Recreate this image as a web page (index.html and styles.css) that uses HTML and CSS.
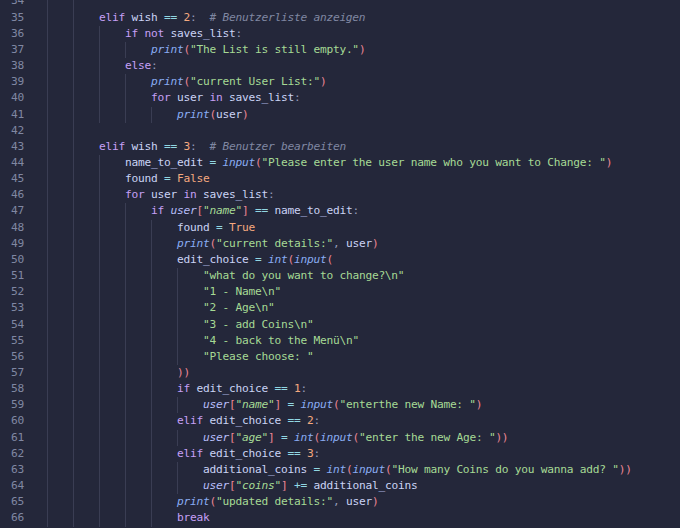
FILE: index.html
```html
<!DOCTYPE html>
<html>
<head>
<meta charset="utf-8">
<link rel="stylesheet" href="styles.css">
</head>
<body>
<div class="editor">
<div class="ln"><span class="no">34</span><span class="g"></span><span class="g"></span><span class="t"></span></div>
<div class="ln"><span class="no">35</span><span class="g"></span><span class="g"></span><span class="t"><span class="k">elif</span> wish <span class="o">==</span> <span class="n">2</span><span class="u">:</span>  <span class="c"># Benutzerliste anzeigen</span></span></div>
<div class="ln"><span class="no">36</span><span class="g"></span><span class="g"></span><span class="g"></span><span class="t"><span class="k">if</span> <span class="k">not</span> saves_list<span class="u">:</span></span></div>
<div class="ln"><span class="no">37</span><span class="g"></span><span class="g"></span><span class="g"></span><span class="g"></span><span class="t"><span class="f">print</span><span class="p">(</span><span class="s">"The List is still empty."</span><span class="p">)</span></span></div>
<div class="ln"><span class="no">38</span><span class="g"></span><span class="g"></span><span class="g"></span><span class="t"><span class="k">else</span><span class="u">:</span></span></div>
<div class="ln"><span class="no">39</span><span class="g"></span><span class="g"></span><span class="g"></span><span class="g"></span><span class="t"><span class="f">print</span><span class="p">(</span><span class="s">"current User List:"</span><span class="p">)</span></span></div>
<div class="ln"><span class="no">40</span><span class="g"></span><span class="g"></span><span class="g"></span><span class="g"></span><span class="t"><span class="k">for</span> user <span class="k">in</span> saves_list<span class="u">:</span></span></div>
<div class="ln"><span class="no">41</span><span class="g"></span><span class="g"></span><span class="g"></span><span class="g"></span><span class="g"></span><span class="t"><span class="f">print</span><span class="p">(</span>user<span class="p">)</span></span></div>
<div class="ln"><span class="no">42</span><span class="g"></span><span class="g"></span><span class="t"></span></div>
<div class="ln"><span class="no">43</span><span class="g"></span><span class="g"></span><span class="t"><span class="k">elif</span> wish <span class="o">==</span> <span class="n">3</span><span class="u">:</span>  <span class="c"># Benutzer bearbeiten</span></span></div>
<div class="ln"><span class="no">44</span><span class="g"></span><span class="g"></span><span class="g"></span><span class="t">name_to_edit <span class="o">=</span> <span class="f">input</span><span class="p">(</span><span class="s">"Please enter the user name who you want to Change: "</span><span class="p">)</span></span></div>
<div class="ln"><span class="no">45</span><span class="g"></span><span class="g"></span><span class="g"></span><span class="t">found <span class="o">=</span> <span class="n">False</span></span></div>
<div class="ln"><span class="no">46</span><span class="g"></span><span class="g"></span><span class="g"></span><span class="t"><span class="k">for</span> user <span class="k">in</span> saves_list<span class="u">:</span></span></div>
<div class="ln"><span class="no">47</span><span class="g"></span><span class="g"></span><span class="g"></span><span class="g"></span><span class="t"><span class="k">if</span> <span class="v">user</span><span class="p">[</span><span class="s">"<i>name</i>"</span><span class="p">]</span> <span class="o">==</span> name_to_edit<span class="u">:</span></span></div>
<div class="ln"><span class="no">48</span><span class="g"></span><span class="g"></span><span class="g"></span><span class="g"></span><span class="g"></span><span class="t">found <span class="o">=</span> <span class="n">True</span></span></div>
<div class="ln"><span class="no">49</span><span class="g"></span><span class="g"></span><span class="g"></span><span class="g"></span><span class="g"></span><span class="t"><span class="f">print</span><span class="p">(</span><span class="s">"current details:"</span><span class="u">,</span> user<span class="p">)</span></span></div>
<div class="ln"><span class="no">50</span><span class="g"></span><span class="g"></span><span class="g"></span><span class="g"></span><span class="g"></span><span class="t">edit_choice <span class="o">=</span> <span class="f">int</span><span class="p">(</span><span class="f">input</span><span class="p">(</span></span></div>
<div class="ln"><span class="no">51</span><span class="g"></span><span class="g"></span><span class="g"></span><span class="g"></span><span class="g"></span><span class="g"></span><span class="t"><span class="s">"what do you want to change?\n"</span></span></div>
<div class="ln"><span class="no">52</span><span class="g"></span><span class="g"></span><span class="g"></span><span class="g"></span><span class="g"></span><span class="g"></span><span class="t"><span class="s">"1 - Name\n"</span></span></div>
<div class="ln"><span class="no">53</span><span class="g"></span><span class="g"></span><span class="g"></span><span class="g"></span><span class="g"></span><span class="g"></span><span class="t"><span class="s">"2 - Age\n"</span></span></div>
<div class="ln"><span class="no">54</span><span class="g"></span><span class="g"></span><span class="g"></span><span class="g"></span><span class="g"></span><span class="g"></span><span class="t"><span class="s">"3 - add Coins\n"</span></span></div>
<div class="ln"><span class="no">55</span><span class="g"></span><span class="g"></span><span class="g"></span><span class="g"></span><span class="g"></span><span class="g"></span><span class="t"><span class="s">"4 - back to the Menü\n"</span></span></div>
<div class="ln"><span class="no">56</span><span class="g"></span><span class="g"></span><span class="g"></span><span class="g"></span><span class="g"></span><span class="g"></span><span class="t"><span class="s">"Please choose: "</span></span></div>
<div class="ln"><span class="no">57</span><span class="g"></span><span class="g"></span><span class="g"></span><span class="g"></span><span class="g"></span><span class="t"><span class="p">))</span></span></div>
<div class="ln"><span class="no">58</span><span class="g"></span><span class="g"></span><span class="g"></span><span class="g"></span><span class="g"></span><span class="t"><span class="k">if</span> edit_choice <span class="o">==</span> <span class="n">1</span><span class="u">:</span></span></div>
<div class="ln"><span class="no">59</span><span class="g"></span><span class="g"></span><span class="g"></span><span class="g"></span><span class="g"></span><span class="g"></span><span class="t"><span class="v">user</span><span class="p">[</span><span class="s">"<i>name</i>"</span><span class="p">]</span> <span class="o">=</span> <span class="f">input</span><span class="p">(</span><span class="s">"enterthe new Name: "</span><span class="p">)</span></span></div>
<div class="ln"><span class="no">60</span><span class="g"></span><span class="g"></span><span class="g"></span><span class="g"></span><span class="g"></span><span class="t"><span class="k">elif</span> edit_choice <span class="o">==</span> <span class="n">2</span><span class="u">:</span></span></div>
<div class="ln"><span class="no">61</span><span class="g"></span><span class="g"></span><span class="g"></span><span class="g"></span><span class="g"></span><span class="g"></span><span class="t"><span class="v">user</span><span class="p">[</span><span class="s">"<i>age</i>"</span><span class="p">]</span> <span class="o">=</span> <span class="f">int</span><span class="p">(</span><span class="f">input</span><span class="p">(</span><span class="s">"enter the new Age: "</span><span class="p">))</span></span></div>
<div class="ln"><span class="no">62</span><span class="g"></span><span class="g"></span><span class="g"></span><span class="g"></span><span class="g"></span><span class="t"><span class="k">elif</span> edit_choice <span class="o">==</span> <span class="n">3</span><span class="u">:</span></span></div>
<div class="ln"><span class="no">63</span><span class="g"></span><span class="g"></span><span class="g"></span><span class="g"></span><span class="g"></span><span class="g"></span><span class="t">additional_coins <span class="o">=</span> <span class="f">int</span><span class="p">(</span><span class="f">input</span><span class="p">(</span><span class="s">"How many Coins do you wanna add? "</span><span class="p">))</span></span></div>
<div class="ln"><span class="no">64</span><span class="g"></span><span class="g"></span><span class="g"></span><span class="g"></span><span class="g"></span><span class="g"></span><span class="t"><span class="v">user</span><span class="p">[</span><span class="s">"<i>coins</i>"</span><span class="p">]</span> <span class="o">+=</span> additional_coins</span></div>
<div class="ln"><span class="no">65</span><span class="g"></span><span class="g"></span><span class="g"></span><span class="g"></span><span class="g"></span><span class="t"><span class="f">print</span><span class="p">(</span><span class="s">"updated details:"</span><span class="u">,</span> user<span class="p">)</span></span></div>
<div class="ln"><span class="no">66</span><span class="g"></span><span class="g"></span><span class="g"></span><span class="g"></span><span class="g"></span><span class="t"><span class="k">break</span></span></div>
</div>
</body>
</html>
```
FILE: styles.css
```css
html, body {
  margin: 0;
  padding: 0;
  background: #24273a;
  overflow: hidden;
}
.editor {
  height: 534.6px;
  overflow: hidden;
  margin-top: -6.6px;
  font-family: "DejaVu Sans Mono", "Liberation Mono", monospace;
  font-size: 11.2px;
  letter-spacing: -0.24px;
  color: #cad3f5;
}
.ln {
  display: flex;
  height: 16.17px;
  line-height: 16.17px;
}
.no {
  flex: none;
  width: 24px;
  text-align: right;
  margin-right: 23px;
  color: #8087a2;
}
.g {
  flex: none;
  width: 26px;
  box-sizing: border-box;
  border-left: 1px solid #3a3d53;
}
.t {
  white-space: pre;
}
.k { color: #c6a0f6; }
.f { color: #8aadf4; font-style: italic; }
.s { color: #a6da95; }
.s i { font-style: italic; }
.n { color: #f5a97f; }
.p { color: #ed8796; }
.o { color: #91d7e3; }
.u { color: #939ab7; }
.c { color: #8087a2; font-style: italic; }
.v { color: #b7bdf8; font-style: italic; }
```
